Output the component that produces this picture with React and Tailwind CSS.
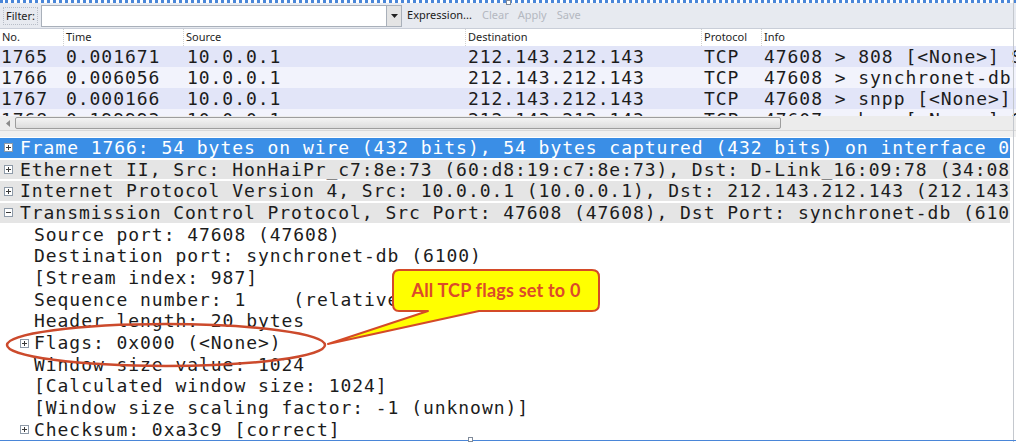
import React from "react";

const packets = [
  { no: "1765", time: "0.001671", src: "10.0.0.1", dst: "212.143.212.143", proto: "TCP", info: "47608 > 808 [<None>] Seq=1 Win=1024 Len=0", bg: "bg-[#e2e5f8]" },
  { no: "1766", time: "0.006056", src: "10.0.0.1", dst: "212.143.212.143", proto: "TCP", info: "47608 > synchronet-db [<None>] Seq=1 Win=1024 Len=0", bg: "bg-[#f2f3fc]" },
  { no: "1767", time: "0.000166", src: "10.0.0.1", dst: "212.143.212.143", proto: "TCP", info: "47608 > snpp [<None>] Seq=1 Win=1024 Len=0", bg: "bg-[#e2e5f8]" },
  { no: "1768", time: "0.199993", src: "10.0.0.1", dst: "212.143.212.143", proto: "TCP", info: "47607 > bgp [<None>] Seq=1 Win=1024 Len=0", bg: "bg-[#f2f3fc]" },
];

const details = [
  { text: "Frame 1766: 54 bytes on wire (432 bits), 54 bytes captured (432 bits) on interface 0", level: 0, exp: "+", kind: "sel" },
  { text: "Ethernet II, Src: HonHaiPr_c7:8e:73 (60:d8:19:c7:8e:73), Dst: D-Link_16:09:78 (34:08:04:16:09:78)", level: 0, exp: "+", kind: "top" },
  { text: "Internet Protocol Version 4, Src: 10.0.0.1 (10.0.0.1), Dst: 212.143.212.143 (212.143.212.143)", level: 0, exp: "+", kind: "top" },
  { text: "Transmission Control Protocol, Src Port: 47608 (47608), Dst Port: synchronet-db (6100), Seq: 1, Len: 0", level: 0, exp: "-", kind: "top" },
  { text: "Source port: 47608 (47608)", level: 1 },
  { text: "Destination port: synchronet-db (6100)", level: 1 },
  { text: "[Stream index: 987]", level: 1 },
  { text: "Sequence number: 1    (relative sequence number)", level: 1 },
  { text: "Header length: 20 bytes", level: 1 },
  { text: "Flags: 0x000 (<None>)", level: 1, exp: "+" },
  { text: "Window size value: 1024", level: 1 },
  { text: "[Calculated window size: 1024]", level: 1 },
  { text: "[Window size scaling factor: -1 (unknown)]", level: 1 },
  { text: "Checksum: 0xa3c9 [correct]", level: 1, exp: "+" },
];

function Expander({ sign }) {
  return (
    <span className="flex h-[9px] w-[9px] shrink-0 items-center justify-center border border-[#8e9aa8] bg-white">
      <svg width="7" height="7" viewBox="0 0 7 7">
        <path d="M1 3.5H6" stroke="#3b3b3b" strokeWidth="1" />
        {sign === "+" && <path d="M3.5 1V6" stroke="#3b3b3b" strokeWidth="1" />}
      </svg>
    </span>
  );
}

const mono = "font-['DejaVu_Sans_Mono',monospace] text-[18px] tracking-[0.95px] whitespace-pre";
const ui = "font-['Noto_Sans',sans-serif] text-[11px]";

export default function App() {
  return (
    <div className="relative h-[442px] w-[1016px] overflow-hidden bg-white">
      {/* toolbar */}
      <div className="border-t-[3px] border-dotted border-[#4a86d8]">
        <div className="flex h-[26px] items-center border-b border-[#c9ced8] bg-[#e7eaf0] pl-[3px]">
          <span className={`${ui} border border-dotted border-[#b8bec8] px-[2px] leading-[16px] text-[#222]`}>Filter:</span>
          <div className="ml-[3px] flex h-[22px] w-[361px] border border-[#a9b0ba] bg-white">
            <div className="flex-1" />
            <div className="flex w-[15px] items-center justify-center border-l border-[#a9b0ba] bg-[#e4e4e4]">
              <svg width="7" height="4" viewBox="0 0 7 4"><path d="M0 0H7L3.5 4Z" fill="#222" /></svg>
            </div>
          </div>
          <span className={`${ui} ml-[5px] text-[#1a1a1a]`}>Expression...</span>
          <span className={`${ui} ml-[10px] text-[#b4b8c0]`}>Clear</span>
          <span className={`${ui} ml-[9px] text-[#b4b8c0]`}>Apply</span>
          <span className={`${ui} ml-[10px] text-[#b4b8c0]`}>Save</span>
        </div>
      </div>

      {/* column header */}
      <div className={`${ui} flex h-[17px] items-center text-[#1e1e1e]`}>
        <div className="w-[63px] pl-[2px]">No.</div>
        <div className="w-[120px] border-l border-dotted border-[#d0d0d0] pl-[2px]">Time</div>
        <div className="w-[282px] border-l border-dotted border-[#d0d0d0] pl-[2px]">Source</div>
        <div className="w-[236px] border-l border-dotted border-[#d0d0d0] pl-[2px]">Destination</div>
        <div className="w-[60px] border-l border-dotted border-[#d0d0d0] pl-[2px]">Protocol</div>
        <div className="flex-1 border-l border-dotted border-[#d0d0d0] pl-[2px]">Info</div>
      </div>

      {/* packet list */}
      <div className="h-[70px] overflow-hidden">
        {packets.map((p) => (
          <div key={p.no} className={`${mono} ${p.bg} flex h-[21px] items-center overflow-hidden text-[#1c1c1c]`}>
            <div className="w-[65px] shrink-0 pl-[1px]">{p.no}</div>
            <div className="w-[120px] shrink-0 pl-[1px]">{p.time}</div>
            <div className="w-[282px] shrink-0 pl-[2px]">{p.src}</div>
            <div className="w-[236px] shrink-0 pl-[1px]">{p.dst}</div>
            <div className="w-[60px] shrink-0 pl-[1px]">{p.proto}</div>
            <div className="shrink-0 pl-[1px]">{p.info}</div>
          </div>
        ))}
      </div>

      {/* horizontal scrollbar */}
      <div className="flex h-[14px] items-center bg-[#ececec]">
        <div className="flex h-[14px] w-[15px] items-center justify-center">
          <svg width="4" height="7" viewBox="0 0 4 7"><path d="M4 0V7L0 3.5Z" fill="#8a8a8a" /></svg>
        </div>
        <div className="h-[12px] w-[766px] rounded-[2px] border border-[#9d9d9d] bg-gradient-to-b from-[#f4f4f4] to-[#dcdcdc]" />
      </div>

      {/* splitter */}
      <div className="h-[7px] border-t border-[#d9d9d9] bg-[#f0f0f0]" />

      {/* details tree */}
      <div className="w-[1010px] overflow-hidden pt-[1px]">
        {details.map((d, i) => {
          const rowBg =
            d.kind === "sel"
              ? "bg-[#3a8ee6] text-white"
              : d.kind === "top"
              ? "bg-[#e5e5e5] text-[#1c1c1c]"
              : "bg-white text-[#1c1c1c]";
          return (
            <div
              key={i}
              className={`${mono} ${rowBg} box-border flex h-[21.7px] items-center border-b-2 border-white`}
            >
              <div className={`flex shrink-0 items-center ${d.level === 0 ? "w-[20px] pl-[4px]" : "w-[34px] pl-[20px]"}`}>
                {d.exp && <Expander sign={d.exp} />}
              </div>
              <span className="leading-[20px]">{d.text}</span>
            </div>
          );
        })}
      </div>

      {/* annotation overlay */}
      <svg className="pointer-events-none absolute left-0 top-0" width="1016" height="442" viewBox="0 0 1016 442">
        <ellipse cx="166" cy="345" rx="159" ry="21" fill="none" stroke="#cc4a2c" strokeWidth="2.5" />
        <path
          d="M399 270 H592 Q599 270 599 277 V304 Q599 311 592 311 H479 L328 344 L428 311 H399 Q393 311 393 304 V277 Q393 270 399 270 Z"
          fill="#ffff00"
          stroke="#d44a28"
          strokeWidth="2"
          strokeLinejoin="round"
        />
      </svg>
      <div className="absolute left-[393px] top-[270px] flex h-[41px] w-[206px] items-center justify-center font-['Lato',sans-serif] text-[18px] font-bold tracking-[0.2px] text-[#dc4a2a]">
        All TCP flags set to 0
      </div>

      {/* image frame handles */}
      <div className="absolute right-[2px] top-0 h-[442px] w-px bg-[#c4c8ce]" />
      <div className="absolute left-[506px] top-0 h-[5px] w-[5px] border border-[#7f8a99] bg-white" />
      <div className="absolute bottom-[1px] left-0 h-px w-[1016px] bg-[#4a86d8]" />
      <div className="absolute bottom-0 left-[468px] h-[5px] w-[5px] border border-[#7f8a99] bg-white" />
    </div>
  );
}
